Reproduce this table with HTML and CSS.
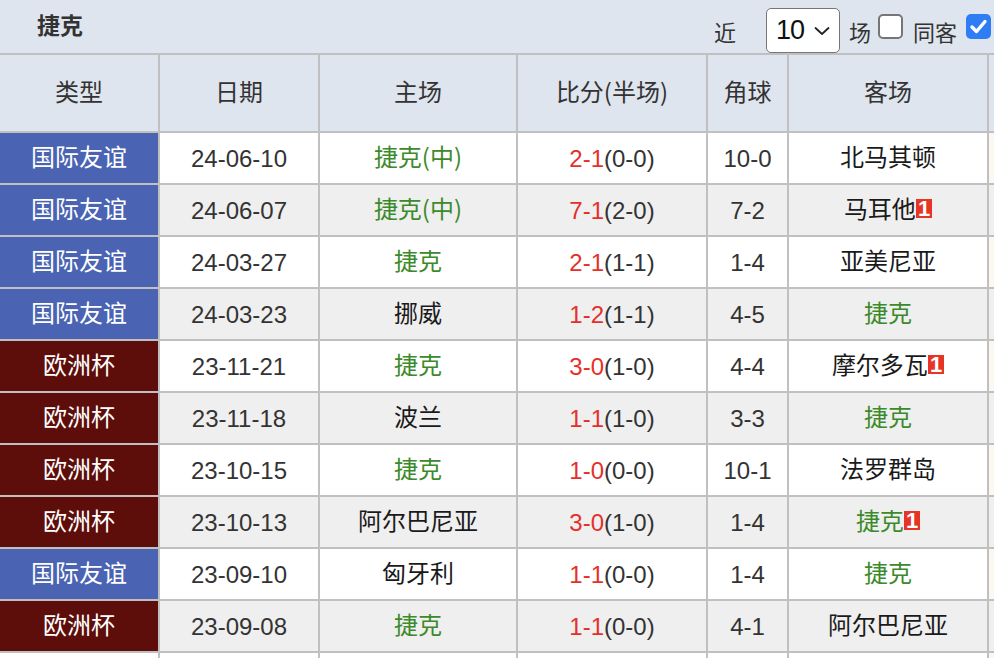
FILE: index.html
```html
<!DOCTYPE html>
<html lang="zh-CN">
<head>
<meta charset="utf-8">
<title>捷克</title>
<link rel="stylesheet" href="styles.css">
</head>
<body>
<div class="page">
  <div class="topbar">
    <div class="title">捷克</div>
    <div class="controls">
      <span class="lbl lbl-near">近</span>
      <div class="select"><span class="select-val">10</span><svg class="chev" width="16" height="10" viewBox="0 0 16 10"><path d="M1.5 2 L8 8 L14.5 2" fill="none" stroke="#222" stroke-width="1.8" stroke-linecap="round" stroke-linejoin="round"/></svg></div>
      <span class="lbl lbl-games">场</span>
      <span class="cb"></span>
      <span class="lbl lbl-same">同客</span>
      <span class="cb cb-on"><svg width="25" height="25" viewBox="0 0 25 25"><path d="M6 13 L10.5 17.5 L19 7.5" fill="none" stroke="#fff" stroke-width="3.4" stroke-linecap="round" stroke-linejoin="round"/></svg></span>
    </div>
  </div>

  <div class="table">
    <div class="row head">
      <div class="cell cjk">类型</div>
      <div class="cell cjk">日期</div>
      <div class="cell cjk">主场</div>
      <div class="cell cjk">比分(半场)</div>
      <div class="cell cjk">角球</div>
      <div class="cell cjk">客场</div>
      <div class="cell extra"></div>
    </div>

    <div class="row">
      <div class="cell type friendly">国际友谊</div>
      <div class="cell num">24-06-10</div>
      <div class="cell team green">捷克(中)</div>
      <div class="cell num"><span class="red">2-1</span>(0-0)</div>
      <div class="cell num">10-0</div>
      <div class="cell team">北马其顿</div>
      <div class="cell extra"></div>
    </div>
    <div class="row alt">
      <div class="cell type friendly">国际友谊</div>
      <div class="cell num">24-06-07</div>
      <div class="cell team green">捷克(中)</div>
      <div class="cell num"><span class="red">7-1</span>(2-0)</div>
      <div class="cell num">7-2</div>
      <div class="cell team">马耳他<span class="badge">1</span></div>
      <div class="cell extra"></div>
    </div>
    <div class="row">
      <div class="cell type friendly">国际友谊</div>
      <div class="cell num">24-03-27</div>
      <div class="cell team green">捷克</div>
      <div class="cell num"><span class="red">2-1</span>(1-1)</div>
      <div class="cell num">1-4</div>
      <div class="cell team">亚美尼亚</div>
      <div class="cell extra"></div>
    </div>
    <div class="row alt">
      <div class="cell type friendly">国际友谊</div>
      <div class="cell num">24-03-23</div>
      <div class="cell team">挪威</div>
      <div class="cell num"><span class="red">1-2</span>(1-1)</div>
      <div class="cell num">4-5</div>
      <div class="cell team green">捷克</div>
      <div class="cell extra"></div>
    </div>
    <div class="row">
      <div class="cell type euro">欧洲杯</div>
      <div class="cell num">23-11-21</div>
      <div class="cell team green">捷克</div>
      <div class="cell num"><span class="red">3-0</span>(1-0)</div>
      <div class="cell num">4-4</div>
      <div class="cell team">摩尔多瓦<span class="badge">1</span></div>
      <div class="cell extra"></div>
    </div>
    <div class="row alt">
      <div class="cell type euro">欧洲杯</div>
      <div class="cell num">23-11-18</div>
      <div class="cell team">波兰</div>
      <div class="cell num"><span class="red">1-1</span>(1-0)</div>
      <div class="cell num">3-3</div>
      <div class="cell team green">捷克</div>
      <div class="cell extra"></div>
    </div>
    <div class="row">
      <div class="cell type euro">欧洲杯</div>
      <div class="cell num">23-10-15</div>
      <div class="cell team green">捷克</div>
      <div class="cell num"><span class="red">1-0</span>(0-0)</div>
      <div class="cell num">10-1</div>
      <div class="cell team">法罗群岛</div>
      <div class="cell extra"></div>
    </div>
    <div class="row alt">
      <div class="cell type euro">欧洲杯</div>
      <div class="cell num">23-10-13</div>
      <div class="cell team">阿尔巴尼亚</div>
      <div class="cell num"><span class="red">3-0</span>(1-0)</div>
      <div class="cell num">1-4</div>
      <div class="cell team green">捷克<span class="badge">1</span></div>
      <div class="cell extra"></div>
    </div>
    <div class="row">
      <div class="cell type friendly">国际友谊</div>
      <div class="cell num">23-09-10</div>
      <div class="cell team">匈牙利</div>
      <div class="cell num"><span class="red">1-1</span>(0-0)</div>
      <div class="cell num">1-4</div>
      <div class="cell team green">捷克</div>
      <div class="cell extra"></div>
    </div>
    <div class="row alt">
      <div class="cell type euro">欧洲杯</div>
      <div class="cell num">23-09-08</div>
      <div class="cell team green">捷克</div>
      <div class="cell num"><span class="red">1-1</span>(0-0)</div>
      <div class="cell num">4-1</div>
      <div class="cell team">阿尔巴尼亚</div>
      <div class="cell extra"></div>
    </div>
    <div class="row">
      <div class="cell"></div>
      <div class="cell"></div>
      <div class="cell"></div>
      <div class="cell"></div>
      <div class="cell"></div>
      <div class="cell"></div>
      <div class="cell extra"></div>
    </div>
  </div>
</div>
</body>
</html>
```

FILE: styles.css
```css
html, body {
  margin: 0;
  padding: 0;
  overflow: hidden;
  background: #ffffff;
}

.page {
  width: 1100px;
  font-family: "Liberation Sans", "Noto Sans CJK SC", sans-serif;
  font-size: 24px;
  color: #333333;
}

.topbar {
  height: 53px;
  width: 994px;
  background: #dfe5ee;
  display: flex;
  align-items: center;
  box-sizing: border-box;
  padding-left: 37px;
}

.title {
  font-family: "Noto Sans CJK SC", sans-serif;
  font-weight: bold;
  font-size: 23px;
  color: #333333;
  margin-top: -6px;
}

.controls {
  margin-left: auto;
  align-self: flex-end;
  height: 45px;
  display: flex;
  align-items: center;
  padding-right: 3px;
  box-sizing: border-box;
}

.lbl {
  font-family: "Noto Sans CJK SC", sans-serif;
  font-size: 22px;
  color: #333333;
  line-height: 1;
}

.lbl-near { margin-right: 30px; margin-left: -1px; }
.lbl-games { margin-left: 9px; margin-right: 7px; }
.lbl-same { margin-left: 10px; margin-right: 9px; }

.select {
  width: 74px;
  height: 45px;
  box-sizing: border-box;
  background: #ffffff;
  border: 1px solid #767676;
  border-radius: 5px;
  display: flex;
  align-items: center;
  padding-left: 9px;
  padding-right: 9px;
}

.select-val {
  font-family: "Liberation Sans", sans-serif;
  font-size: 27px;
  color: #111111;
  line-height: 1;
  letter-spacing: -1px;
}

.chev {
  margin-left: auto;
}

.cb {
  width: 25px;
  height: 25px;
  box-sizing: border-box;
  border: 2px solid #767676;
  border-radius: 5px;
  background: #ffffff;
  display: inline-block;
  margin-top: -8px;
}

.cb-on {
  border: none;
  background: #2f7df5;
  display: flex;
}

.table {
  border-top: 2px solid #c0c0c0;
}

.row {
  display: grid;
  grid-template-columns: 160px 160px 198px 190px 81px 200px 111px;
  height: 52px;
  background: #ffffff;
}

.row.alt {
  background: #efefef;
}

.row.head {
  height: 78px;
  background: #dfe5ee;
}

.cell {
  box-sizing: border-box;
  border-right: 2px solid #c0c0c0;
  border-bottom: 2px solid #c0c0c0;
  display: flex;
  align-items: center;
  justify-content: center;
  white-space: nowrap;
  line-height: 30px;
}

.cjk,
.type,
.team {
  font-family: "Noto Sans CJK SC", sans-serif;
  padding-bottom: 4px;
}

.head .cell {
  color: #333333;
}

.cell.extra {
  background: #fdf7f1;
}

.row.alt .cell.extra {
  background: #efefef;
}

.head .cell.extra {
  background: #dfe5ee;
}

.type {
  color: #ffffff;
}

.friendly {
  background: #4a64b3;
}

.euro {
  background: #5d0e0a;
}

.num {
  color: #333333;
  padding-top: 2px;
}

.team {
  color: #1a1a1a;
}

.team.green {
  color: #3d8a2b;
}

.red {
  color: #e5302a;
}

.badge {
  display: inline-block;
  background: #e63526;
  color: #ffffff;
  font-family: "Liberation Sans", sans-serif;
  font-weight: bold;
  font-size: 22px;
  line-height: 19px;
  height: 19px;
  padding: 0 2px;
  margin-left: 0;
  vertical-align: -2px;
}
```
